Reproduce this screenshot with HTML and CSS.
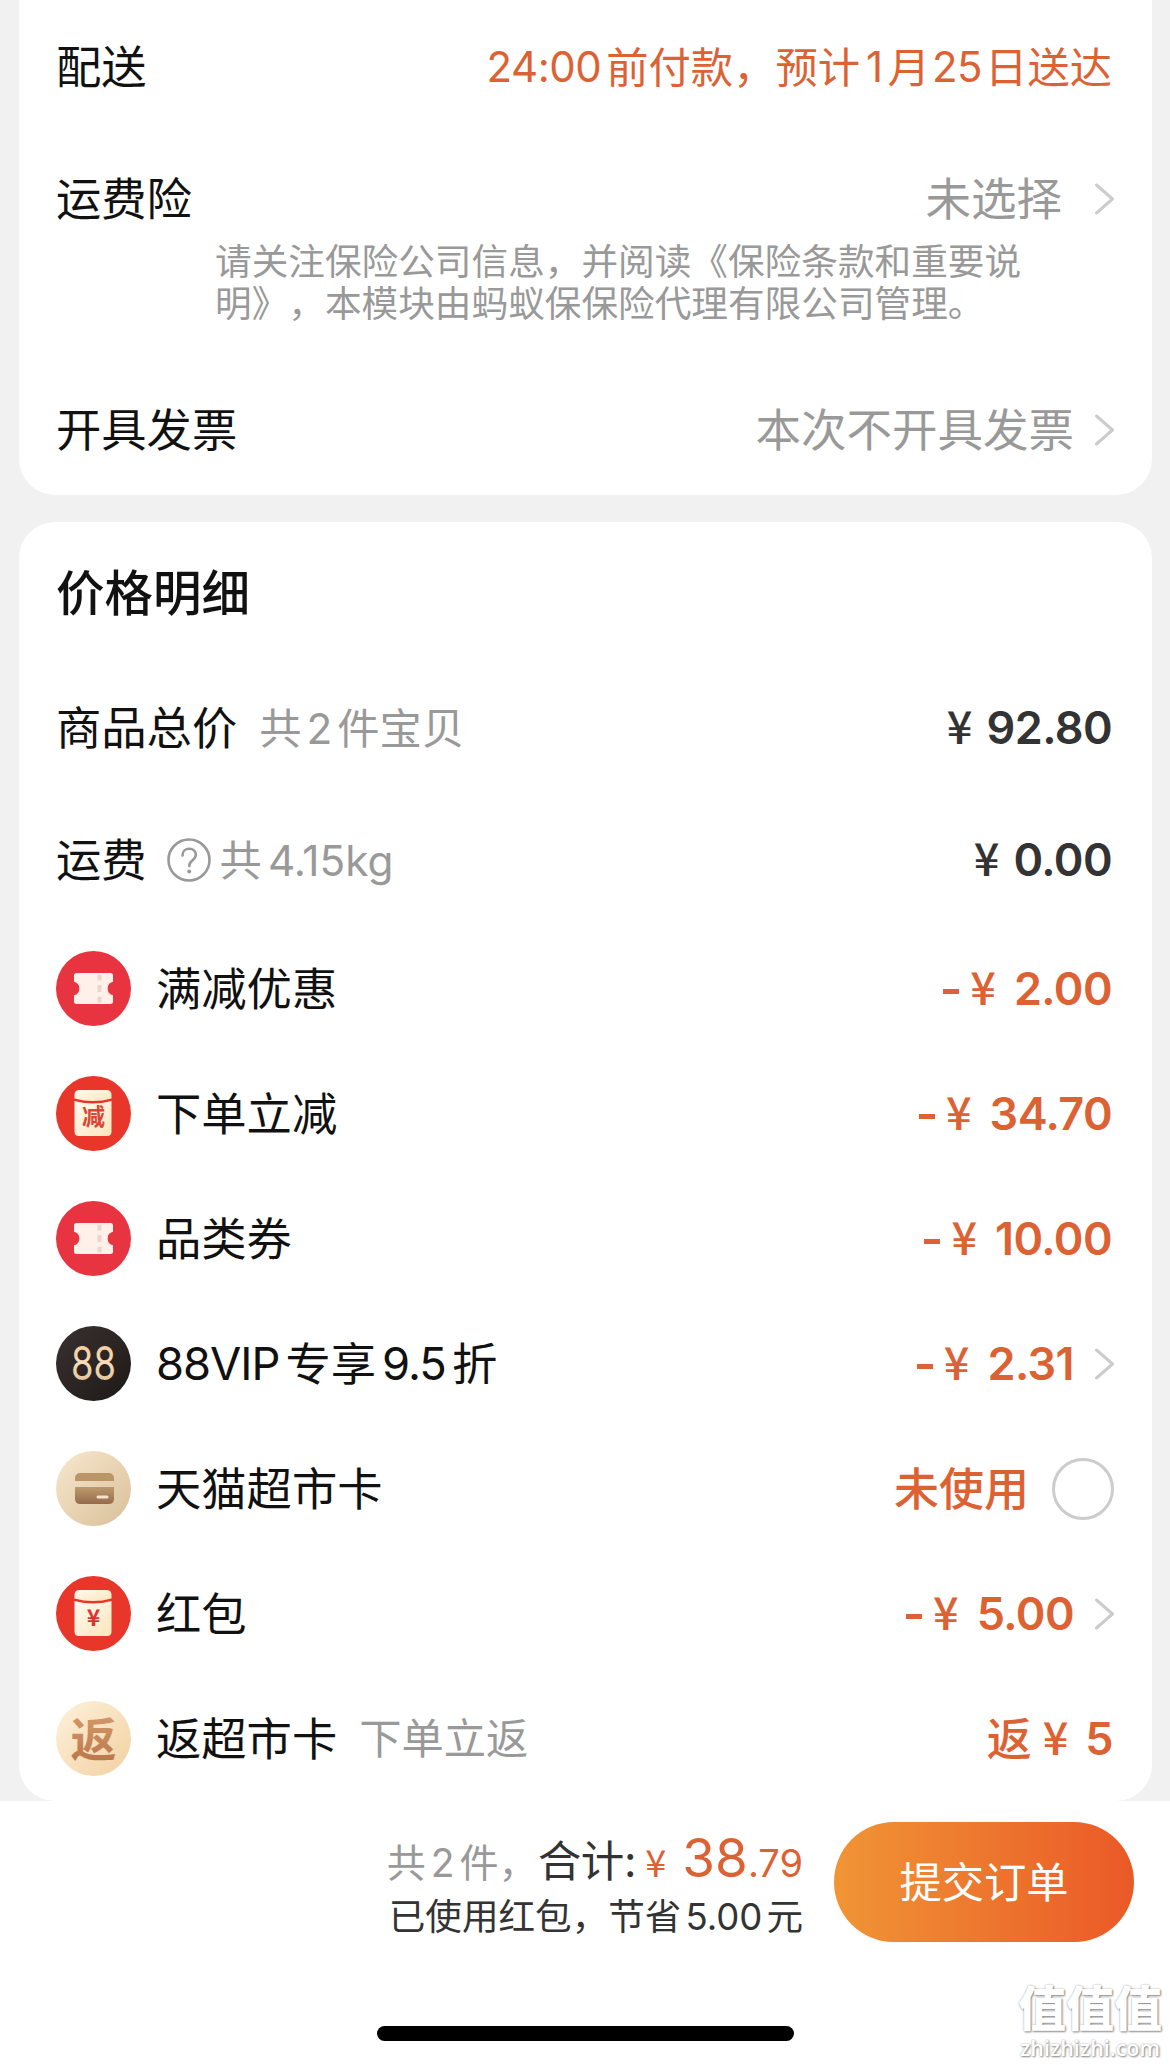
FILE: index.html
```html
<!DOCTYPE html>
<html lang="zh-CN">
<head>
<meta charset="utf-8">
<title>确认订单</title>
<link rel="stylesheet" href="styles.css">
</head>
<body>
<svg class="defs" width="0" height="0" aria-hidden="true">
  <defs>
    <linearGradient id="paper" x1="0" y1="0" x2="1" y2="1"><stop offset="0" stop-color="#fffaf2"/><stop offset="1" stop-color="#fbe6bb"/></linearGradient>
    <linearGradient id="gold" x1="0" y1="0" x2="0" y2="1"><stop offset="0" stop-color="#eebf8e"/><stop offset=".5" stop-color="#f8dcb8"/><stop offset="1" stop-color="#d3b88c"/></linearGradient>
    <linearGradient id="night" x1="0" y1="0" x2="1" y2="1"><stop offset="0" stop-color="#3a3130"/><stop offset="1" stop-color="#1d1917"/></linearGradient>
    <linearGradient id="sand" x1="0" y1="0" x2="1" y2="1"><stop offset="0" stop-color="#f8e8cf"/><stop offset="1" stop-color="#d9bf98"/></linearGradient>
    <linearGradient id="brown" x1="0" y1="0" x2="0" y2="1"><stop offset="0" stop-color="#bd9a6d"/><stop offset="1" stop-color="#966b4c"/></linearGradient>
    <linearGradient id="cream" x1="0" y1="0" x2="1" y2="1"><stop offset="0" stop-color="#fdf2dc"/><stop offset="1" stop-color="#f2d0a0"/></linearGradient>
    <linearGradient id="copper" x1="0" y1="0" x2="0" y2="1"><stop offset="0" stop-color="#dc9f70"/><stop offset="1" stop-color="#b67448"/></linearGradient>
    <symbol id="ticket" viewBox="0 0 75 75">
      <circle cx="37.5" cy="37.5" r="37.5" fill="#e83341"/>
      <path d="M20.500 22h34a2.500 2.500 0 0 1 2.500 2.500v6.200a7 7 0 0 0 0 13.600v6.200a2.500 2.500 0 0 1-2.500 2.500h-34a2.500 2.500 0 0 1-2.500-2.500v-6.200a7 7 0 0 0 0-13.600v-6.200a2.500 2.500 0 0 1 2.500-2.500z" fill="#fff1ea"/>
      <path d="M43.500 24v5.500M43.500 34v7M43.500 46v5.500" stroke="#ecd5cb" stroke-width="4" fill="none"/>
    </symbol>
    <symbol id="packet" viewBox="0 0 75 75">
      <circle cx="37.500" cy="37.500" r="37.500" fill="#e8362b"/>
      <path d="M18.500 19q0-5 5-5h27q5 0 5 5v3.500q-18.500 5-37 0z" fill="url(#paper)"/>
      <path d="M18.500 25q18.500 5 37 0v30.500q0 4.500-4.500 4.500h-28q-4.500 0-4.500-4.500z" fill="url(#paper)"/>
    </symbol>
    <symbol id="arrow" viewBox="0 0 20 32">
      <path d="M1.500 2 17.500 16 1.500 30" fill="none" stroke="#ccc" stroke-width="3" stroke-linecap="round" stroke-linejoin="round"/>
    </symbol>
  </defs>
</svg>

<main class="page">
  <section class="card card-service">
    <div class="row row-delivery">
      <span class="label">配送</span>
      <span class="promise"><span class="num">24:00</span><span class="cjk g1">前付款，预计</span><span class="num g2">1</span><span class="cjk g3">月</span><span class="num g4">25</span><span class="cjk g5">日送达</span></span>
    </div>
    <div class="row row-insurance">
      <span class="label">运费险</span>
      <span class="value value-insurance">未选择</span>
      <svg class="arrow"><use href="#arrow"/></svg>
    </div>
    <p class="note">请关注保险公司信息，并阅读《保险条款和重要说<br>明》，本模块由蚂蚁保保险代理有限公司管理。</p>
    <div class="row row-invoice">
      <span class="label">开具发票</span>
      <span class="value">本次不开具发票</span>
      <svg class="arrow"><use href="#arrow"/></svg>
    </div>
  </section>

  <section class="card card-price">
    <h2 class="title">价格明细</h2>
    <div class="row row-sum">
      <span class="label">商品总价</span>
      <span class="hint hint-items"><span>共</span><span class="num">2</span><span>件宝贝</span></span>
      <span class="price dark"><span class="yen">¥</span><span class="amount">92.80</span></span>
    </div>
    <div class="row row-sum">
      <span class="label">运费</span>
      <svg class="help" viewBox="0 0 44 44"><circle cx="22" cy="22" r="20.500" fill="none" stroke="#999" stroke-width="2.600"/><path d="M15.500 17.500c0-4 2.800-6.700 6.700-6.700s6.600 2.500 6.600 6c0 3-1.700 4.400-3.700 5.900-2 1.500-2.800 2.500-2.800 5.300" fill="none" stroke="#999" stroke-width="2.600" stroke-linecap="round"/><circle cx="22.200" cy="33.500" r="2" fill="#999"/></svg>
      <span class="hint hint-weight"><span>共</span><span class="num">4.15kg</span></span>
      <span class="price dark"><span class="yen">¥</span><span class="amount">0.00</span></span>
    </div>
    <div class="row row-item">
      <svg class="badge"><use href="#ticket"/></svg>
      <span class="label">满减优惠</span>
      <span class="price"><i class="minus"></i><span class="yen">¥</span><span class="amount">2.00</span></span>
    </div>
    <div class="row row-item">
      <svg class="badge" viewBox="0 0 75 75"><use href="#packet"/><text class="badge-cut" x="37.500" y="49">减</text></svg>
      <span class="label">下单立减</span>
      <span class="price"><i class="minus"></i><span class="yen">¥</span><span class="amount">34.70</span></span>
    </div>
    <div class="row row-item">
      <svg class="badge"><use href="#ticket"/></svg>
      <span class="label">品类券</span>
      <span class="price"><i class="minus"></i><span class="yen">¥</span><span class="amount">10.00</span></span>
    </div>
    <div class="row row-item">
      <svg class="badge" viewBox="0 0 75 75"><circle cx="37.500" cy="37.500" r="37.500" fill="url(#night)"/><text class="badge-vip" x="15" y="54" textLength="45" lengthAdjust="spacingAndGlyphs" fill="url(#gold)">88</text></svg>
      <span class="label label-vip"><span class="num">88VIP</span><span>专享</span><span class="num">9.5</span><span>折</span></span>
      <span class="price"><i class="minus"></i><span class="yen">¥</span><span class="amount">2.31</span></span>
      <svg class="arrow"><use href="#arrow"/></svg>
    </div>
    <div class="row row-item">
      <svg class="badge" viewBox="0 0 75 75"><circle cx="37.500" cy="37.500" r="37.500" fill="url(#sand)"/><path d="M19 30v-2.500q0-5.500 5.500-5.500h28q5.500 0 5.500 5.500v2.500z" fill="#b99568"/><path d="M19 36h39v11.500q0 5.500-5.500 5.500h-28q-5.500 0-5.500-5.500z" fill="url(#brown)"/><path d="M42 46h9" stroke="#f5e4cb" stroke-width="3" stroke-linecap="round"/></svg>
      <span class="label">天猫超市卡</span>
      <span class="price unused">未使用</span>
      <span class="radio"></span>
    </div>
    <div class="row row-item">
      <svg class="badge" viewBox="0 0 75 75"><use href="#packet"/><text class="badge-yen" x="37.500" y="49.500">¥</text></svg>
      <span class="label">红包</span>
      <span class="price"><i class="minus"></i><span class="yen">¥</span><span class="amount">5.00</span></span>
      <svg class="arrow"><use href="#arrow"/></svg>
    </div>
    <div class="row row-item">
      <svg class="badge" viewBox="0 0 75 75"><circle cx="37.500" cy="37.500" r="37.500" fill="url(#cream)"/><text class="badge-back" x="37.500" y="54.500" fill="url(#copper)">返</text></svg>
      <span class="label">返超市卡</span>
      <span class="hint hint-back">下单立返</span>
      <span class="price back"><span class="word">返</span><span class="yen">¥</span><span class="amount">5</span></span>
    </div>
  </section>

  <footer class="bar">
    <div class="checkout">
      <div class="summary">
        <div class="total">
          <span class="count"><span>共</span><span class="num">2</span><span>件，</span></span>
          <span class="sum-label">合计:</span>
          <span class="sum-yen">¥</span>
          <span class="sum-int">38</span><span class="sum-dec">.79</span>
        </div>
        <div class="saved"><span>已使用红包，节省</span><span class="num">5.00</span><span>元</span></div>
      </div>
      <button class="submit" type="button">提交订单</button>
    </div>
    <div class="home-indicator"></div>
    <div class="watermark"><span class="wm-name">值值值</span><span class="wm-site">zhizhizhi.com</span></div>
  </footer>
</main>
</body>
</html>
```
FILE: styles.css
```css
* { box-sizing: border-box; margin: 0; padding: 0; }
body {
  background: #f1f1f1;
  font-family: Inter, "Noto Sans CJK SC", sans-serif;
  text-spacing-trim: space-all;
  color: #111;
}
.defs { display: block; }
.page {
  display: flex;
  flex-direction: column;
  width: 1170px;
  height: 2065px;
  overflow: hidden;
}
.card {
  margin: 0 18px 0 19px;
  padding: 0 40px 0 37px;
  background: #fff;
  border-radius: 36px;
}
.card-service {
  height: 495px;
  border-radius: 0 0 36px 36px;
}
.card-price { margin-top: 27px; height: 1279px; }
.row { display: flex; align-items: center; white-space: nowrap; }
.label { padding-top: 2px; font-size: 45.300px; line-height: 60px; }

.row-delivery { height: 134px; }
.row-insurance { height: 80px; margin-top: 25px; }
.row-invoice { height: 80px; margin-top: 65px; }
.row-sum { height: 132px; }
.row-item { height: 125px; }
.row-item .label { margin-left: 25px; }

.promise {
  display: flex;
  margin-left: auto;
  color: #dc6234;
  font-size: 42.300px;
  line-height: 60px;
}
.promise .num { font-size: 42px; letter-spacing: -0.5px; }
.promise .cjk { padding-top: 1px; }
.g1 { margin-left: 5px; }
.g2 { margin-left: 6px; }
.g3 { margin-left: 5px; }
.g4 { margin-left: 2px; }
.g5 { margin-left: 3px; }

.value {
  margin-left: auto;
  padding-top: 2px;
  font-size: 45.500px;
  line-height: 60px;
  color: #999;
}
.value-insurance { margin-right: 12px; }
.arrow { width: 20px; height: 32px; margin-left: 21px; margin-right: -3px; }
.note {
  margin-left: 159px;
  padding-top: 2px;
  font-size: 36.650px;
  line-height: 42px;
  color: #999;
  white-space: nowrap;
}

.title {
  height: 140px;
  line-height: 144px;
  font-size: 48.500px;
  font-weight: 500;
}
.hint {
  display: flex;
  padding-top: 1px;
  color: #999;
  font-size: 42.300px;
  line-height: 60px;
}
.hint-items { margin-left: 22px; gap: 5px; }
.hint-weight { margin-left: 9px; gap: 6px; }
.hint-back { margin-left: 22px; }
.help { width: 44px; height: 44px; margin-left: 20px; }

.price {
  display: flex;
  align-items: center;
  margin-left: auto;
  color: #dc6234;
  font-size: 45px;
  font-weight: 600;
  line-height: 60px;
}
.price.dark { color: #333; }
.minus { width: 16px; height: 5px; margin: 5px 11px 0 0; background: currentColor; }
.yen { margin-top: -6px; font-family: "Noto Sans CJK SC", sans-serif; font-weight: 500; line-height: 60px; }
.amount { margin-left: 18px; letter-spacing: -0.6px; }
.dark .amount { margin-left: 14px; }
.back .yen { margin-left: 11px; }
.back .amount { margin-left: 17px; margin-right: -1px; }
.word, .unused { padding-top: 2px; font-weight: 500; }
.unused { margin-right: 23px; }
.radio {
  width: 62px;
  height: 62px;
  margin-right: -2px;
  border: 3px solid #ccc;
  border-radius: 50%;
}

.badge { flex: none; width: 75px; height: 75px; }
.badge-cut, .badge-yen, .badge-back { font-family: "Noto Sans CJK SC", sans-serif; font-weight: 700; text-anchor: middle; }
.badge-cut { font-size: 23px; fill: #dc4434; }
.badge-yen { font-size: 23px; fill: #dc3434; }
.badge-back { font-size: 46px; }
.badge-vip { font-size: 47px; font-weight: 400; }
.label-vip { display: flex; gap: 6px; }
.label-vip .num { margin-top: -1px; letter-spacing: -1px; }

.bar {
  position: relative;
  flex: 1;
  background: #fff;
  padding-top: 21px;
}
.checkout { display: flex; justify-content: flex-end; padding-right: 36px; }
.summary { display: flex; flex-direction: column; align-items: flex-end; margin-right: 31px; color: #333; }
.total { display: flex; align-items: baseline; height: 74px; line-height: 72px; white-space: nowrap; }
.count { display: flex; gap: 5px; color: #999; font-size: 39px; }
.sum-label { font-size: 43.500px; letter-spacing: -0.3px; }
.sum-yen { margin-left: 9px; color: #dc6234; font-family: "Noto Sans CJK SC", sans-serif; font-size: 38px; }
.sum-int { margin-left: 16px; color: #dc6234; font-size: 53px; }
.sum-dec { color: #dc6234; font-size: 38px; }
.saved { display: flex; gap: 4px; height: 40px; font-size: 36.600px; line-height: 42px; white-space: nowrap; }
.submit {
  width: 300px;
  height: 120px;
  padding-top: 2px;
  border: 0;
  border-radius: 60px;
  background: linear-gradient(90deg, #f09535, #ea5927);
  color: #fff;
  font: 400 42.300px/118px Inter, "Noto Sans CJK SC", sans-serif;
}
.home-indicator {
  width: 417px;
  height: 15px;
  margin: 84px auto 0;
  border-radius: 8px;
  background: #000;
}
.watermark {
  position: absolute;
  right: 8px;
  bottom: 3px;
  display: flex;
  flex-direction: column;
  align-items: center;
  color: #fff;
  text-shadow: 1px 1px 2px #888, 0 0 2px #aaa;
}
.wm-name { font-size: 48px; font-weight: 900; line-height: 50px; }
.wm-site { font: 600 21.500px/28px "Open Sans", sans-serif; }
```
